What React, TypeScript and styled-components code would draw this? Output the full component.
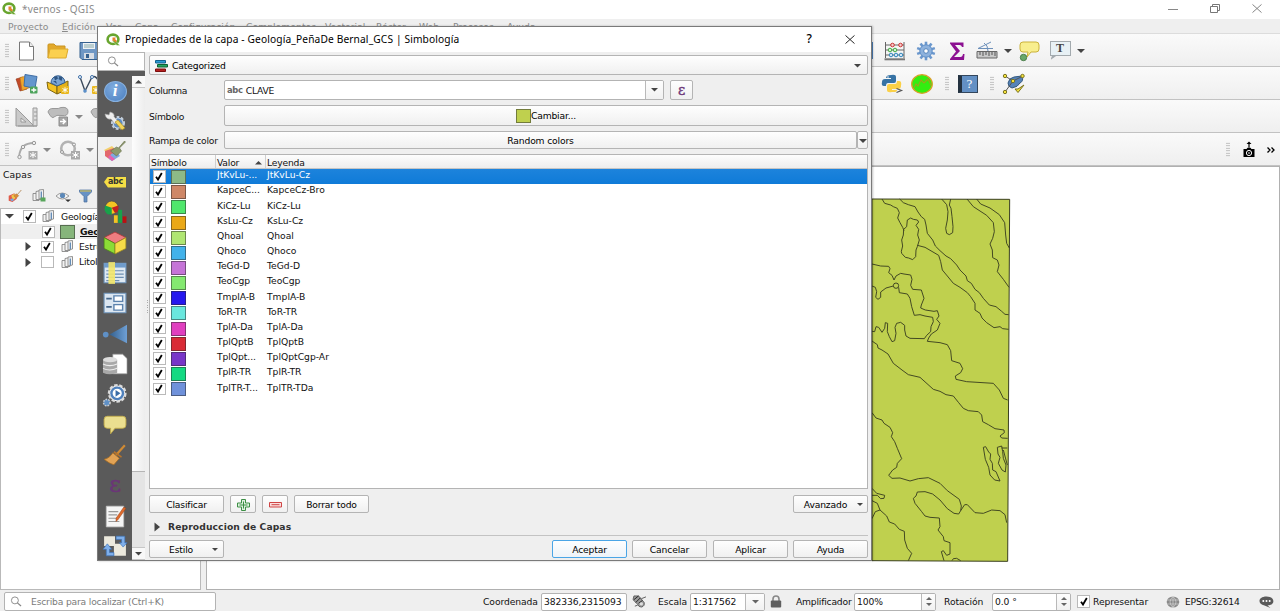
import React from "react";
import styled, { createGlobalStyle, css } from "styled-components";

const Global = createGlobalStyle`
  * { box-sizing: border-box; }
  html, body { margin: 0; padding: 0; overflow: hidden; }
  body { font-family: "DejaVu Sans", sans-serif; font-size: 9.2px; color: #111; line-height: 12px; }
  svg { display: block; overflow: visible; flex: none; }
`;

/* ---------- main window ---------- */
const Window = styled.div`
  width: 1280px; height: 611px; position: relative; overflow: hidden;
  display: flex; flex-direction: column; background: #efefef; white-space: nowrap;
`;
const TitleBar = styled.div`
  height: 19px; flex: none; background: #fff; display: flex; align-items: center;
  color: #8c8c8c; font-family: "Noto Sans", sans-serif; font-size: 10px; letter-spacing: .2px;
  padding: 0 18px 2px 2px; gap: 5px;
`;
const WindowButtons = styled.div`margin-left: auto; display: flex; gap: 32px; align-items: center;`;
const MenuBar = styled.div`
  height: 15px; flex: none; display: flex; align-items: center; color: #8a8a8a; padding: 2px 0 0 8px;
  background: #efefef; border-bottom: 1px solid #dcdcdc;
`;
const MenuItem = styled.span<{ $w: number }>`width: ${p => p.$w}px; letter-spacing: .05px; flex: none;`;
const Toolbar = styled.div`
  height: 33px; flex: none; display: flex; align-items: center; padding-top: 1px;
  background: linear-gradient(#fafafa, #efefef); border-bottom: 1px solid #c2c2c2;
`;
const Slot = styled.div<{ $w: number }>`
  width: ${p => p.$w}px; height: 100%; flex: none; display: flex; align-items: center; justify-content: center;
`;
const RightTools = styled.div<{ $w: number }>`
  width: ${p => p.$w}px; height: 100%; margin-left: auto; display: flex; flex: none; align-items: center;
`;
const Grip = styled.div`
  width: 4px; height: 15px;
  background-image: radial-gradient(circle, #b5b5b5 35%, transparent 45%); background-size: 2px 2.5px;
`;
const SaveEdge = styled.div`width: 2px; height: 17px; background: #4d83bd; margin-right: 6px;`;

const Body = styled.div`flex: 1; min-height: 0; display: flex; gap: 5px;`;
const LayersPanel = styled.div`width: 201px; flex: none; display: flex; flex-direction: column;`;
const PanelTitle = styled.div`height: 17px; padding: 3px 0 0 3px; letter-spacing: .1px;`;
const PanelTools = styled.div`height: 25px; display: flex; align-items: center; padding-left: 3px;`;
const Tree = styled.div`flex: 1; border: 1px solid #b9b9b9; background: #fff;`;
const TreeRow = styled.div<{ $pad: number; $active?: boolean }>`
  height: 15.2px; display: flex; align-items: center; padding-left: ${p => p.$pad}px;
  background: ${p => (p.$active ? "#efefef" : "none")}; letter-spacing: -.2px;
  ${p => p.$active && css`font-weight: bold; text-decoration: underline;`}
`;
const TreeIcon = styled.div<{ $w: number }>`width: ${p => p.$w}px; flex: none; display: flex;`;
const Canvas = styled.div`
  flex: 1; border: 1px solid #b0b0b0; background: #fff; display: flex; padding: 23px 0 0 653px;
`;

const StatusBar = styled.div`height: 21px; flex: none; display: flex; align-items: center; padding: 2px 6px 0 4px; letter-spacing: -.1px;`;
const Field = styled.div<{ $w: number; $h?: number; $ml?: number }>`
  width: ${p => p.$w}px; height: ${p => p.$h ?? 18}px; flex: none; margin-left: ${p => p.$ml ?? 0}px;
  border: 1px solid #b3b3b3; border-radius: 2px; background: #fff; display: flex; align-items: center; padding-left: 2px;
  overflow: hidden;
`;
const FieldText = styled.span`padding-top: 1px;`;
const FieldEnd = styled.div<{ $w: number }>`
  margin-left: auto; width: ${p => p.$w}px; height: 100%; flex: none; border-left: 1px solid #b9b9b9;
  background: linear-gradient(#fdfdfd, #f1f1f1);
  display: flex; flex-direction: column; gap: 3px; align-items: center; justify-content: center;
`;
const Caption = styled.span<{ $w: number; $ml: number; $ls?: number }>`
  width: ${p => p.$w}px; margin-left: ${p => p.$ml}px; flex: none; padding-top: 1px; letter-spacing: ${p => p.$ls ?? -.08}px;
`;
const Placeholder = styled.span`color: #7b7b7b; padding: 1px 0 0 6px; letter-spacing: -.18px;`;

/* ---------- dialog ---------- */
const Dialog = styled.div`
  position: absolute; left: 97px; top: 26px; width: 775px; height: 535px; background: #efefef;
  border: 1px solid #7a7a7a; box-shadow: 1px 0 2px rgba(0,0,0,.25); display: flex; flex-direction: column; letter-spacing: -.25px;
`;
const DialogTitle = styled.div`
  height: 25px; flex: none; background: #fff; display: flex; align-items: center; padding: 0 16px 1px 8px; gap: 4px;
  font-family: "Noto Sans", sans-serif; font-size: 10.2px; color: #000; letter-spacing: .13px;
`;
const HelpMark = styled.span`margin-left: auto; margin-right: 29px; font-size: 12px; font-weight: 500;`;
const DialogBody = styled.div`flex: 1; min-height: 0; display: flex;`;
const Side = styled.div`width: 47px; flex: none; display: flex; flex-direction: column;`;
const SideSearch = styled.div`
  height: 19px; flex: none; background: #fff; border: 1px solid #b5b5b5; border-left: 0; padding: 3px 0 0 9px;
`;
const SideColumns = styled.div`flex: 1; min-height: 0; display: flex;`;
const Categories = styled.div`width: 34px; background: #5a5a5a; padding-top: 4.9px; overflow: hidden;`;
const Category = styled.div<{ $active?: boolean }>`
  height: 30.35px; display: flex; align-items: center; justify-content: center;
  background: ${p => (p.$active ? "#efefef" : "none")};
`;
const ScrollBar = styled.div`width: 13px; display: flex; flex-direction: column; background: #f4f4f4; border-top: 5px solid #5a5a5a;`;
const ScrollCap = styled.div`height: 12px; flex: none; display: flex; align-items: center; justify-content: center; background: #f8f8f8; border-bottom: 1px solid #c6c6c6;`;
const ScrollThumb = styled.div`height: 384px; flex: none; background: linear-gradient(90deg, #fdfdfd, #ededed); border-bottom: 1px solid #b5b5b5;`;
const ScrollTrack = styled.div`flex: 1; background: #e4e4e4; border-bottom: 1px solid #c6c6c6;`;
const Splitter = styled.div`
  width: 4px; flex: none; display: flex; align-items: center; justify-content: center; padding-top: 2px;
`;
const SplitDots = styled.div`width: 1px; height: 15px; background: repeating-linear-gradient(#aaa 0 1px, transparent 1px 2.5px);`;
const Main = styled.div`flex: 1; padding: 3px 4px 0 0; display: flex; flex-direction: column;`;
const Button = styled.div<{ $w?: number; $h?: number; $ml?: number; $primary?: boolean; $left?: boolean; $ls?: number }>`
  ${p => (p.$w ? `width: ${p.$w}px; flex: none;` : "flex: 1;")}
  height: ${p => p.$h ?? 18}px; margin-left: ${p => p.$ml ?? 0}px;
  border: 1px solid ${p => (p.$primary ? "#4aa5e6" : "#b4b4b4")}; border-radius: 2px;
  background: ${p => (p.$primary ? "linear-gradient(#fdfeff, #eef3f8)" : "linear-gradient(#fefefe, #f0f0f0)")};
  display: flex; align-items: center; justify-content: ${p => (p.$left ? "flex-start" : "center")};
  letter-spacing: ${p => p.$ls ?? -.15}px; padding-top: 1px; color: #000;
`;
const FormRow = styled.div<{ $mt: number }>`display: flex; align-items: center; margin-top: ${p => p.$mt}px; flex: none;`;
const FormLabel = styled.span<{ $ls?: number }>`width: 75px; flex: none; padding-top: 2px; letter-spacing: ${p => p.$ls ?? -.25}px;`;
const TypeIcon = styled.span`font-weight: bold; color: #666; font-size: 8.4px; margin-right: 3px; letter-spacing: -.3px;`;
const ArrowAt = styled.div<{ $mr: number }>`margin-left: auto; margin-right: ${p => p.$mr}px;`;
const FillBox = styled.div<{ $c: string; $s?: number }>`
  width: ${p => p.$s ?? 15}px; height: ${p => (p.$s ?? 15) - 1.5}px; flex: none; background: ${p => p.$c};
  border: 1px solid rgba(40,40,40,.5);
`;
const Table = styled.div`height: 335px; flex: none; margin-top: 5px; border: 1px solid #b4b4b4; background: #fff;`;
const HeaderRow = styled.div`
  height: 14px; display: flex; background: linear-gradient(#fdfdfd, #ededed); border-bottom: 1px solid #c4c4c4; letter-spacing: -.2px;
`;
const HeaderCell = styled.div<{ $w?: number }>`
  ${p => (p.$w ? `width: ${p.$w}px; border-right: 1px solid #cfcfcf;` : "flex: 1;")}
  padding: 2px 0 0 1px; display: flex; align-items: center;
`;
const Row = styled.div<{ $sel?: boolean }>`
  height: 15.17px; display: flex; align-items: center; padding-left: 3px;
  ${p => p.$sel && css`background: linear-gradient(#1d83dc, #0f7bd8); color: #fff;`}
`;
const Check = styled.div`
  width: 12.5px; height: 12.5px; border: 1px solid #b9b9b9; background: #fff; flex: none;
  display: flex; align-items: center; justify-content: center;
`;
const Swatch = styled(FillBox)`margin: 1px 31px 0 5.5px; height: 14px; width: 15px;`;
const Cell = styled.span<{ $w: number; $ls: number }>`
  width: ${p => p.$w}px; flex: none; margin-top: -2.5px; letter-spacing: ${p => p.$ls}px;
`;
const Group = styled.div`
  height: 19px; flex: none; margin-top: 4px; border-bottom: 1px solid #c3c3c3; display: flex; align-items: center;
  gap: 8px; padding: 1px 0 0 5px; font-weight: bold; color: #333; letter-spacing: .1px;
`;

/* ---------- glyphs ---------- */
const Down = ({ s = 8, c = "#444" }: { s?: number; c?: string }) => (
  <svg width={s} height={s / 2} viewBox="0 0 8 4"><path d="M0 0h8L4 4z" fill={c} /></svg>
);
const Up = ({ s = 8, c = "#444" }: { s?: number; c?: string }) => (
  <svg width={s} height={s / 2} viewBox="0 0 8 4"><path d="M0 4h8L4 0z" fill={c} /></svg>
);
const Right = ({ c = "#444", h = 9 }: { c?: string; h?: number }) => (
  <svg width="6" height={h} viewBox="0 0 6 9"><path d="M.5 0v9L6 4.500z" fill={c} /></svg>
);
const Tick = () => (
  <svg width="8" height="9" viewBox="0 0 8 9"><path d="M1 4.800L3 7.500L6.800 1" fill="none" stroke="#000" strokeWidth="1.8" /></svg>
);
const Lens = () => (
  <svg width="12" height="11" viewBox="0 0 12 12" fill="none" stroke="#888"><circle cx="4.800" cy="4.800" r="3.800" /><path d="M7.500 7.500l4 3.500" strokeWidth="1.400" /></svg>
);
const Logo = () => (
  <svg width="15" height="13" viewBox="0 0 15 13">
    <ellipse cx="7" cy="6.300" rx="5.400" ry="4.700" fill="none" stroke="#68a52e" strokeWidth="2.600" />
    <path d="M7.500 6l6.500 6.500h-3L7 8.500z" fill="#68a52e" stroke="#fff" strokeWidth=".4" />
    <path d="M6.500 4.500h3.500l-1 1.500 2 2-1.500 1.500-2-2-1 1z" fill="#e8812c" />
  </svg>
);

const I = ({ children, w = 22, h = 20 }: { children: React.ReactNode; w?: number; h?: number }) => (
  <svg width={w} height={h} viewBox="0 0 22 20">{children}</svg>
);
const PageIcon = () => <I><path d="M3.500 1h10l4 4.500V19h-14z" fill="#fff" stroke="#777" /><path d="M13.500 1v4.500h4" fill="#eee" stroke="#777" /></I>;
const FolderIcon = () => <I><path d="M1 17V4q0-1 1-1h5l2 2h9v3" fill="#e3a92a" stroke="#c99422" /><path d="M1 17l2-9h18l-2 9z" fill="#fbd04f" stroke="#dca92c" /></I>;
const SaveIcon = () => <I><path d="M2 1.500h18v17H4l-2-2z" fill="#6f97c4" stroke="#35608f" /><path d="M5 2h12v6H5z" fill="#eef2f6" /><path d="M6 4h10M6 6h10" stroke="#8aa" /><path d="M6 12h10v6H6z" fill="#d7dde4" /><path d="M8 13h3v4H8z" fill="#35608f" /></I>;
const PlusBadge = () => <g><rect x="14" y="12.500" width="7.500" height="7" rx="1" fill="#4ca35b" /><path d="M15.300 16h5M17.800 13.700v4.600" stroke="#fff" strokeWidth="1.300" /></g>;
const StarBadge = ({ c = "#e9b820" }: { c?: string }) => <g><rect x="14" y="12" width="8" height="8" rx="1" fill={c} /><path d="M18 13.300v5.400M15.500 14.500l5 3M20.500 14.500l-5 3" stroke="#fff" /></g>;
const LayersIcon = () => <I><path d="M0 5l7-2 4 12-7 2z" fill="#c34a28" stroke="#8f3418" strokeWidth=".6" /><path d="M4 3.500l9-2 1 12-8 3z" fill="#f0a52e" stroke="#b4761b" strokeWidth=".6" /><path d="M9 .5l12 2-2 12L8 12z" fill="#6496cd" stroke="#3f6ea5" /><PlusBadge /></I>;
const BoxIcon = () => <I><path d="M0 8l10 4v8L1 15z" fill="#f4c321" stroke="#7d6410" /><path d="M10 12l11-5v8l-11 5z" fill="#e4b11a" stroke="#7d6410" /><path d="M4 9a6.500 6.500 0 1 1 14-.5L10 12z" fill="#7ba5d3" stroke="#345f90" /><path d="M7 3l3-1 1 2.500-3 2zM12.500 2l3 1.500-1 3.500-3-2zM6 7l3 0 1 3z" fill="#2f5582" /><StarBadge /></I>;
const VectorIcon = () => <I><path d="M2 3l5 14L14 3q3-2 6 3" fill="none" stroke="#3c4a5c" strokeWidth="1.400" /><g fill="#fff" stroke="#3c6fa8"><circle cx="2" cy="3" r="1.500" /><circle cx="14" cy="3" r="1.500" /></g><circle cx="7" cy="17" r="1.800" fill="#5b8fc9" /><StarBadge /></I>;
const SetSquareIcon = () => <I><path d="M0 1v18h18z" fill="#c9c9c9" stroke="#9a9a9a" /><path d="M5 11v4h5z" fill="#efefef" stroke="#9a9a9a" /><path d="M17 1h4v18h-4z" fill="#ddd" stroke="#9a9a9a" /><path d="M2 19h19M18 5h3M18 9h3M18 13h3" stroke="#999" /></I>;
const BlobIcon = ({ badge = true }: { badge?: boolean }) => <I><path d="M1 5q1-4 6-3.500t7-1q7-1 7 4t-6 4-8 1.500-6-5z" fill="#bdbdbd" stroke="#999" />{badge && <g><path d="M12 10h8.500v9H12z" fill="#a5a5a5" stroke="#8d8d8d" /><path d="M13 14.500h5M15.800 12l2.500 2.500-2.500 2.500" fill="none" stroke="#fff" strokeWidth="1.500" /></g>}</I>;
const CurveIcon = () => <I><path d="M2 17Q3 3 17 3" fill="none" stroke="#aaa" strokeWidth="1.800" /><g fill="#eee" stroke="#999"><circle cx="2.500" cy="17" r="1.700" /><circle cx="6" cy="7" r="1.700" /><circle cx="17" cy="3" r="1.700" /></g><rect x="11.500" y="11" width="9" height="8.500" fill="#aaa" /><path d="M16 12v6M13 13.500l6 3M19 13.500l-6 3" stroke="#fff" /></I>;
const CircleIcon = () => <I><circle cx="9" cy="8.500" r="6.800" fill="none" stroke="#b3b3b3" strokeWidth="2.600" /><g fill="#eee" stroke="#999"><circle cx="3" cy="12" r="1.500" /><circle cx="15" cy="4.500" r="1.500" /></g><rect x="12" y="11" width="9" height="8.500" fill="#aaa" /><path d="M16.500 12v6M13.500 13.500l6 3M19.500 13.500l-6 3" stroke="#fff" /></I>;

const AbacusIcon = () => <I><path d="M1.500 1v16M20 1v16M1.500 4h18.500M1.500 9h18.500M1.500 14h18.500" stroke="#666" fill="none" /><path d="M.5 17.300h20.500v2H.5z" fill="#777" /><g fill="#f6c9c9" stroke="#c33"><circle cx="8.500" cy="4" r="1.800" /><circle cx="16.500" cy="4" r="1.800" /></g><g fill="#d3f0d3" stroke="#4a4"><circle cx="6" cy="9" r="1.800" /><circle cx="11" cy="9" r="1.800" /></g><g fill="#d3e4f5" stroke="#38b"><circle cx="7" cy="14" r="1.800" /><circle cx="12" cy="14" r="1.800" /><circle cx="17" cy="14" r="1.800" /></g></I>;
const GearIcon = () => <I><g transform="translate(11 10)"><g stroke="#6a97cd" strokeWidth="2.600">{[0, 36, 72, 108, 144].map(a => <path key={a} d="M0-9.300V9.300" transform={`rotate(${a})`} />)}</g><circle r="6.200" fill="#8db1dc" stroke="#5f8fc8" /><circle r="2.300" fill="#fff" stroke="#5585bd" /></g></I>;
const SigmaIcon = () => <I><path d="M4 1.500h13.500v4.500H16Q15.500 4 13.500 4H9l5 6-6 6h6.500q2 0 2.500-3h1.500L18 19H4v-1l6-7.500-6-8z" fill="#8c1091" /></I>;
const MeasureIcon = () => <I><path d="M1 10.500h20v6.500H1z" fill="#c8c8c8" stroke="#666" /><path d="M4 11v3M7 11v4M10 11v3M13 11v4M16 11v3M19 11v4" stroke="#555" /><path d="M2 7.500L15 1M2 7.500h15M8 2q4 2 4 8" fill="none" stroke="#6d90ba" /></I>;
const TipIcon = () => <I><path d="M5 1h13q3 0 3 3v4q0 3-3 3h-5l-4 5 1-5H5q-3 0-3-3V4q0-3 3-3z" fill="#f8ee8e" stroke="#cbb23b" /><circle cx="5.500" cy="16.500" r="3.200" fill="#69a869" stroke="#4b7e4b" /></I>;
const TextNote = styled.div`
  width: 21px; height: 15px; margin-bottom: 4px; border: 1px solid #a3aaae; background: #e8f1f5; text-align: center;
  font: bold 12px/12px "Liberation Serif", serif; color: #444; position: relative;
`;
const NoteTail = styled.div`
  position: absolute; left: 0; top: 13px; width: 7px; height: 5px;
  background: #a3aaae; clip-path: polygon(25% 0, 100% 0, 0 100%);
`;
const PythonIcon = () => <I><path d="M10 1q5-1 5 2v4q0 2-2 2H7q-2 0-2 3H3Q0 12 1 8q0-3 3-3h6V4H5q0-3 5-3z" fill="#3773a5" /><path d="M11 18q-5 1-5-2v-4q0-2 2-2h6q2 0 2-3h2q3 0 2 5 0 3-3 3h-6v1h5q0 2-3 2z" fill="#fbd148" /><circle cx="7" cy="3" r=".8" fill="#fff" /><path d="M15.500 14.500l5 2-5 2" fill="none" stroke="#555" strokeWidth="1.200" /></I>;
const GreenIcon = () => <I><ellipse cx="11" cy="10" rx="10.300" ry="9.300" fill="#33ee11" stroke="#d9a028" strokeWidth="1.300" /><path d="M3 14l2-4 2 2 3-6 3 3 2-2 2-2 2 4 1 3" fill="none" stroke="#9aa81c" strokeWidth="1.100" /></I>;
const Book = styled.div`
  width: 20px; height: 18px; background: #6390c4; border: 1px solid #33465c; border-left: 4px solid #243240;
  color: #fff; text-align: center; font: 13px/16px "Liberation Serif", serif;
`;
const VertexIcon = () => <I><path d="M5 9q1-5 6-6l8-1q2 5-2 7-2 4-8 5-4-1-4-5z" fill="#5583b8" stroke="#34597f" /><path d="M2 2l8 5-8 11M10 7l9-4.500" fill="none" stroke="#555" /><g fill="#f5e23c" stroke="#7a7320"><circle cx="2" cy="2" r="1.700" /><circle cx="19.500" cy="2" r="1.700" /><circle cx="10" cy="7" r="1.700" /><circle cx="2" cy="18" r="1.700" /></g><path d="M12 15l3 3.500L21 11l-6 4z" fill="#f5e23c" stroke="#7a7320" /></I>;
const CameraIcon = () => <svg width="14" height="17" viewBox="0 0 14 17"><path d="M7 .5l2.500 2.500H7.600v3.500H6.400V3H4.500zM1.500 8h3l1-1.200h3l1 1.200h3v8h-11z" fill="#000" /><circle cx="7" cy="12" r="2.600" fill="none" stroke="#fff" /><circle cx="7" cy="12" r=".8" fill="#fff" /></svg>;

const GroupIcon = ({ add }: { add?: boolean }) => <svg width="14" height="13" viewBox="0 0 14 13"><g fill="#f3f3f3" stroke="#888" strokeWidth=".9"><path d="M1 4.500h6v7H1z" /><path d="M4 2.500l5-1v9H4z" /><path d="M7 1l4.500-.5V9L7 10z" /></g><path d="M9.300 2.500v6.500" stroke="#5d88b5" strokeWidth="1.300" />{add && <path d="M8.500 8.500h5v4h-5z" fill="#58a65c" />}</svg>;
const StyleIcon = () => <svg width="14" height="12" viewBox="0 0 22 19"><path d="M1 9l9-4 4 9-7 5-6-2z" fill="#e05b4b" /><path d="M5 9l5-3 3 6-5 4z" fill="#f1c64b" /><path d="M3 15l4-2 3 3-4 2z" fill="#7aa7dc" /><path d="M21 0l-6 7 2 2-4 4-4-4 4-3 2 1z" fill="#d98b3a" stroke="#a36a2a" strokeWidth=".6" /></svg>;
const SymbologyIcon = () => <I w={24} h={20}><path d="M0 8l8-4 3 3-7 5z" fill="#f3cf6a" /><path d="M1 9l9-3 4 8-6 5-7-5z" fill="#e2686c" /><path d="M7 12l6-2 3 4-8 5-3-2z" fill="#7fa9de" /><path d="M4 15l4 4 3-2-5-4z" fill="#ea5fae" /><path d="M21.500 0l-6 6 2 3-5 5-6-5 6-4 2 1 6-7z" fill="#8e9a6c" stroke="#666f4b" strokeWidth=".6" /></I>;
const EyeIcon = () => <svg width="17" height="12" viewBox="0 0 17 12"><path d="M1 6q6-6 13 0-7 6-13 0z" fill="#f4f4f4" stroke="#999" /><circle cx="7.500" cy="5.500" r="2.600" fill="#5b88b8" /><path d="M10 9.500h6l-3 2.500z" fill="#333" /></svg>;
const FunnelIcon = () => <svg width="13" height="13" viewBox="0 0 13 13"><path d="M.5 1h12v2L8 7.500V13H5V7.500L.5 3z" fill="#6792c4" stroke="#476f9d" strokeWidth=".7" /><path d="M1 1.500h11v1H1z" fill="#e2c444" /></svg>;

const InfoMark = styled.div`
  width: 23px; height: 21px; border-radius: 50%; background: radial-gradient(circle at 40% 30%, #7fabde, #4a7fc0);
  border: 1px solid #86b0df; color: #fff; text-align: center; font: italic bold 17px/18px "Liberation Serif", serif;
`;
const AbcTag = styled.div`
  width: 22px; height: 11px; background: #f5de45; clip-path: polygon(0 50%, 18% 0, 100% 0, 100% 100%, 18% 100%);
  font-weight: bold; font-size: 8px; line-height: 10px; padding-left: 4px; letter-spacing: -.3px; color: #333;
`;
const Epsilon = styled.span<{ $s: number }>`
  font: ${p => p.$s}px/1 "DejaVu Serif", serif; color: #6b3577; padding-bottom: 2px; -webkit-text-stroke: .4px #6b3577;
`;
const WrenchIcon = () => <I w={24}><circle cx="14" cy="12" r="5.500" fill="#d7e4f2" stroke="#c3cfdc" strokeWidth="3" strokeDasharray="2.500 1.500" /><circle cx="14" cy="12" r="4.500" fill="#5c8bc4" /><path d="M1 3l4 1 1-3q5 1 4 5l4 4-3 3-4-5Q2 9 1 3z" fill="#eee" stroke="#aaa" strokeWidth=".6" /><path d="M11 11l3-2 7 8-3 2z" fill="#f2d45a" stroke="#a2861c" strokeWidth=".6" /></I>;
const DiagramIcon = () => <I w={24} h={22}><circle cx="8" cy="6" r="6" fill="#f3c423" stroke="#444" strokeWidth=".6" /><path d="M8 6L2 4q-2 5 2 8l4 .5z" fill="#19a14a" /><path d="M8 6l6-2q1 6-3 7z" fill="#c32020" /><path d="M10 13h3.500v7H10z" fill="#f3c423" /><path d="M14 8h3.500v12H14z" fill="#19a14a" /><path d="M18 14h3.500v6H18z" fill="#b11" /></I>;
const CubeIcon = () => <I w={24} h={22}><path d="M11 0l10 5-10 5.500L1 5z" fill="#ef7d80" stroke="#a33" strokeWidth=".7" /><path d="M1 5l10 5.500V20L1 15z" fill="#8bdc36" stroke="#4a7d18" strokeWidth=".7" /><path d="M21 5l-10 5.500V20l10-5z" fill="#f5dc48" stroke="#998620" strokeWidth=".7" /></I>;
const TableIcon = () => <I w={24} h={22}><path d="M1 1h20v18H1z" fill="#dfe9f3" stroke="#7096bd" /><path d="M1 1h20v4H1z" fill="#6f9bcb" /><path d="M3 8h16M3 11h16M3 14h16M3 17h12" stroke="#6d8fb3" /><path d="M5 0h6v20H5z" fill="#f4e76a" opacity=".9" /></I>;
const FormIcon = () => <I w={24} h={22}><path d="M1 1h20v18H1z" fill="#dbe6f1" stroke="#7096bd" /><path d="M3 6h5M3 13.500h5" stroke="#45678c" strokeWidth="1.500" /><path d="M10 3.500h8v5h-8zM10 11.500h8v5h-8z" fill="#fff" stroke="#5c83ae" strokeWidth="1.300" /></I>;
const JoinIcon = () => <I w={24} h={22}><defs><linearGradient id="tri"><stop offset="0" stopColor="#33608f" /><stop offset="1" stopColor="#6fa0d5" /></linearGradient></defs><path d="M6 10.500L22 1.500v17z" fill="url(#tri)" /><circle cx="2.500" cy="10.500" r="2.600" fill="#5f90c6" /></I>;
const DbIcon = () => <I w={24} h={22}><path d="M9 1h9l4 4v14H9z" fill="#fff" stroke="#999" strokeWidth=".6" /><path d="M0 6v12q6 3 13 0V6z" fill="#a9a9a9" /><ellipse cx="6.500" cy="6" rx="6.500" ry="2.500" fill="#ddd" /><path d="M0 10q6 3 13 0M0 14q6 3 13 0" fill="none" stroke="#eee" /></I>;
const ActionIcon = () => <I w={24} h={22}><circle cx="13" cy="8.500" r="7.300" fill="#fff" stroke="#ddd" strokeWidth="2.600" strokeDasharray="3 1.500" /><circle cx="13" cy="8.500" r="5.300" fill="#fff" stroke="#4e80bc" strokeWidth="2.200" /><path d="M11.500 5.500v6l4.500-3z" fill="#3a6ca6" /><circle cx="3.500" cy="17" r="3" fill="#5f90c6" stroke="#ccc" strokeWidth="1.400" strokeDasharray="1.500 1" /></I>;
const BubbleIcon = () => <I w={24} h={22}><path d="M4 2h14q3 0 3 3v5q0 3-3 3h-7l-4 5v-5H4q-3 0-3-3V5q0-3 3-3z" fill="#ebdf90" stroke="#c4ae4a" strokeWidth=".8" /></I>;
const BroomIcon = () => <I w={24} h={22}><path d="M20 1l-8 9" stroke="#d08a33" strokeWidth="2" /><path d="M9 8l6 5-5 6q-4-1-9-5 5-1 8-6z" fill="#e2a355" stroke="#a36b22" strokeWidth=".7" /><path d="M10 7l7 5" stroke="#b8742a" strokeWidth="1.500" /></I>;
const NotesIcon = () => <I w={24} h={22}><path d="M3 1h16v19H3z" fill="#f5f5f5" stroke="#bbb" strokeWidth=".7" /><path d="M5 6h9M5 9h8M5 12h8M5 15h10" stroke="#999" /><path d="M21 3l-7 10-2 2v-3L19 2z" fill="#e06a2c" stroke="#994014" strokeWidth=".5" /></I>;
const SyncIcon = () => <I w={24} h={22}><path d="M1 1h10v9H1zM10 8h11v11H10z" fill="#ece9dd" /><path d="M12 1h8v6h2l-3.500 4L15 7h2V4h-5z" fill="#7fafea" stroke="#3b72b8" strokeWidth=".6" /><path d="M10 19H3v-6H0l4-5 4 5H6v3h4z" fill="#7fafea" stroke="#3b72b8" strokeWidth=".6" /></I>;
const CatIcon = () => <svg width="13" height="12" viewBox="0 0 13 12"><path d="M.5.5h10v2.500H.5z" fill="#2b9bd5" stroke="#14618e" /><path d="M2.500 4.500h10V7h-10z" fill="#22a65f" stroke="#0f6035" /><path d="M.5 9h10v2.500H.5z" fill="#b51f1f" stroke="#7b0d0d" /></svg>;
const PlusIcon = () => <svg width="13" height="12" viewBox="0 0 13 12"><path d="M4.500.5h4v3.500h4v4h-4v3.500h-4V8h-4V4h4z" fill="#dff1df" stroke="#3c8f45" /><path d="M6.500 2.500v7M2.500 6h8" stroke="#3c8f45" /></svg>;
const MinusIcon = () => <svg width="13" height="6" viewBox="0 0 13 6"><path d="M.5.5h12v4.500H.5z" fill="#fbdede" stroke="#cf4444" /><path d="M2.500 2.700h8" stroke="#cf4444" /></svg>;
const MouseIcon = () => <svg width="15" height="13" viewBox="0 0 16 14"><path d="M2 1l5 0 6 7q1 4-3 5-3 0-4-3L1 5z" fill="#999" stroke="#444" strokeWidth=".8" /><path d="M2 5l5-4M4 8l5-5M7 9l4-3" stroke="#222" /><path d="M10 4l5-2M3 12l3-1" stroke="#555" /><circle cx="10" cy="9.500" r="1.800" fill="#ddd" /></svg>;
const LockIcon = () => <svg width="12" height="13" viewBox="0 0 12 13"><path d="M3 6V4q0-3 3-3t3 3v2" fill="none" stroke="#888" strokeWidth="1.600" /><rect x=".8" y="5.500" width="10.400" height="7" rx="1" fill="#5f5f5f" /></svg>;
const GlobeIcon = () => <svg width="14" height="12" viewBox="0 0 14 12"><ellipse cx="7" cy="6" rx="6.300" ry="5.500" fill="#8a8a8a" /><path d="M7 .5v11M1 4h12M1 8h12M7 .5q-6 5.500 0 11M7 .5q6 5.500 0 11" fill="none" stroke="#ddd" strokeWidth=".6" /></svg>;
const ChatIcon = () => <svg width="15" height="12" viewBox="0 0 15 12"><path d="M7.500.5c9 0 9 9 1 9l3 2.500-6-2.500c-7-1-7-9 2-9z" fill="#5a5a5a" /><g fill="#fff"><circle cx="4.300" cy="5" r="1" /><circle cx="7.500" cy="5" r="1" /><circle cx="10.700" cy="5" r="1" /></g></svg>;

/* Geological outlines; three drawing units per pixel. */
const northLines = [
  "66,27 74,40 92,45 100,50 112,55 118,68 113,84 120,98 128,112 132,122",
  "119,27 130,38 145,44 165,50 174,66 184,80 194,88 198,105 202,130 218,150 226,168 240,182 258,198 272,206 290,225 300,240 318,258 322,272 334,280 345,298 358,308 370,325 388,345 408,350 425,364 435,373 446,374",
  "142,90 152,84 160,88 172,90 176,96 168,106 176,118 173,135 178,150 172,170 168,180 167,200 158,209 146,204 136,202 125,190 124,184 128,168 125,150 130,135 131,118 140,110 142,90",
  "172,166 195,172 236,196 242,215 247,240 262,258 280,280 300,292 322,308 332,320 345,340 345,360 360,370 366,384 380,398 402,413 420,410 428,416 446,418",
  "245,27 260,44 264,65 262,90 257,115 260,130 268,134 278,128 279,110 276,80 273,55 268,45 272,27",
  "321,27 340,50 380,76 400,98 403,125 398,145 390,162 397,180 398,203 412,210 417,225 412,245 430,268 447,292",
  "350,27 362,42 390,54 418,74 434,98 437,135 440,160 448,174",
  "36,222 62,228 86,229 90,236 86,248 96,256 102,270 108,258 122,250 132,252 152,255 156,268 152,286 158,298 184,300 192,325 184,345 182,354 196,360 222,364 232,362 237,378 230,388 240,400 232,420 214,432 206,444 202,454 240,458 262,464 272,482 275,512 300,520 308,536 302,548 286,558 288,568 320,575 400,580 418,600 430,625 443,630",
  "100,288 78,294 62,306 62,322 54,328 47,322 50,305 46,292 36,288",
  "116,292 118,308 142,312 150,325 155,350 163,376 180,374 195,378 218,382 220,395 213,410 212,425 200,436 193,446 150,445 138,438 134,420 134,406 122,397 110,400 105,412 108,430 104,452 96,455 88,440 82,425 83,400 76,398 74,415 66,427 56,412 48,410 44,425 36,424",
  "36,453 52,464 54,474 66,480 84,492 100,520 126,540 145,554 180,562 220,598 240,604 258,614 280,618 296,638 310,655 325,662 355,665 365,675 368,695 385,704 405,716 432,720 433,728 420,738 425,744 443,745",
];
const southLines = [
  "36,128 48,144 66,150 72,160 90,172 98,188 94,200 104,215 112,235 125,266 112,280 110,292 98,300 86,316 96,325 120,324 150,333 175,326 205,323 240,340 262,362 298,388 304,408 302,422 296,432 282,430 262,416 240,390 218,372 195,365 172,366 168,378 160,385 165,400 185,425 195,438 210,442 238,444 240,470 234,480 250,500 252,512 270,518 270,552 260,556 250,542 244,545 252,572",
  "302,422 314,404 322,404 345,428 370,430 395,420 420,422 435,434 440,458",
  "36,355 50,370 74,376 72,385 62,386 52,376 36,376",
  "36,392 52,400 60,420 46,425 36,446",
  "60,420 80,438 88,456 104,462 118,478 133,484 134,510 142,535 155,550 145,572",
  "276,572 280,566 290,565 302,572",
  "370,232 377,230 386,246 392,252 390,268 397,280 398,300 408,305 420,333 404,330 390,315 386,292 376,268 370,232",
  "412,232 425,228 428,245 430,265 438,285 436,306 426,300 415,280 420,262 414,252 412,232",
  "425,234 442,234", "430,240 442,285",
];
const GeoMap = () => (
  <svg width="160" height="375" viewBox="0 0 480 1125">
    <path d="M36 27L449 28L443 1114L36 1112z" fill="#bfd04e" stroke="#3a3f20" strokeWidth="3" />
    <g fill="none" stroke="#3a401f" strokeWidth="2.800" strokeLinejoin="round">
      {northLines.map(points => <polyline key={points} points={points} />)}
      <circle cx="108" cy="287" r="8" />
      <g transform="translate(0 540)">{southLines.map(points => <polyline key={points} points={points} />)}</g>
    </g>
  </svg>
);

const menus: [string, number][] = [["Proyecto", 54], ["Edición", 44], ["Ver", 29], ["Capa", 36], ["Configuración", 75], ["Complementos", 79], ["Vectorial", 51], ["Ráster", 43], ["Web", 34], ["Procesos", 54], ["Ayuda", 40]];
const classes: [string, string, string][] = [
  ["JtKvLu-...", "JtKvLu-Cz", "#8db987"], ["KapceC...", "KapceCz-Bro", "#ce8767"], ["KiCz-Lu", "KiCz-Lu", "#50e76c"],
  ["KsLu-Cz", "KsLu-Cz", "#eaa817"], ["Qhoal", "Qhoal", "#b0e672"], ["Qhoco", "Qhoco", "#42b2ea"], ["TeGd-D", "TeGd-D", "#c574d7"],
  ["TeoCgp", "TeoCgp", "#84e970"], ["TmplA-B", "TmplA-B", "#2517ee"], ["ToR-TR", "ToR-TR", "#69e7de"], ["TplA-Da", "TplA-Da", "#e03fbf"],
  ["TplQptB", "TplQptB", "#d92b36"], ["TplQpt...", "TplQptCgp-Ar", "#7836c8"], ["TplR-TR", "TplR-TR", "#14d982"], ["TplTR-T...", "TplTR-TDa", "#6f91da"],
];
const categories: React.ReactNode[] = [
  <InfoMark>i</InfoMark>, <WrenchIcon />, <SymbologyIcon />, <AbcTag>abc</AbcTag>, <DiagramIcon />, <CubeIcon />, <TableIcon />, <FormIcon />,
  <JoinIcon />, <DbIcon />, <ActionIcon />, <BubbleIcon />, <BroomIcon />, <Epsilon $s={23}>ε</Epsilon>, <NotesIcon />, <SyncIcon />,
];

const Toolbars = () => (
  <>
    <Toolbar>
      <Slot $w={13}><Grip /></Slot><Slot $w={28}><PageIcon /></Slot><Slot $w={34}><FolderIcon /></Slot><Slot $w={28}><SaveIcon /></Slot>
      <RightTools $w={409}>
        <Slot $w={8}><SaveEdge /></Slot><Slot $w={32}><AbacusIcon /></Slot><Slot $w={30}><GearIcon /></Slot><Slot $w={32}><SigmaIcon /></Slot>
        <Slot $w={28}><MeasureIcon /></Slot><Slot $w={14}><Down /></Slot><Slot $w={28}><TipIcon /></Slot>
        <Slot $w={34}><TextNote>T<NoteTail /></TextNote></Slot><Slot $w={8}><Down /></Slot>
      </RightTools>
    </Toolbar>
    <Toolbar>
      <Slot $w={13}><Grip /></Slot><Slot $w={28}><LayersIcon /></Slot><Slot $w={34}><BoxIcon /></Slot><Slot $w={28}><VectorIcon /></Slot>
      <RightTools $w={403}>
        <Slot $w={30}><PythonIcon /></Slot><Slot $w={30}><GreenIcon /></Slot><Slot $w={20}><Grip /></Slot>
        <Slot $w={22}><Book>?</Book></Slot><Slot $w={26}><Grip /></Slot><Slot $w={18}><VertexIcon /></Slot>
      </RightTools>
    </Toolbar>
    <Toolbar>
      <Slot $w={13}><Grip /></Slot><Slot $w={28}><SetSquareIcon /></Slot><Slot $w={34}><BlobIcon /></Slot>
      <Slot $w={7}><Down c="#888" /></Slot><Slot $w={38}><BlobIcon badge={false} /></Slot>
    </Toolbar>
    <Toolbar>
      <Slot $w={13}><Grip /></Slot><Slot $w={30}><CurveIcon /></Slot><Slot $w={8}><Down c="#888" /></Slot>
      <Slot $w={38}><CircleIcon /></Slot><Slot $w={1}><Down c="#888" /></Slot>
      <RightTools $w={62}>
        <Slot $w={20}><Grip /></Slot><Slot $w={22}><CameraIcon /></Slot>
        <Slot $w={22}><svg width="8" height="6" viewBox="0 0 8 6" fill="none" stroke="#000" strokeWidth="1.300"><path d="M.5.5L3 3 .5 5.500M4.500.5L7 3 4.500 5.500" /></svg></Slot>
      </RightTools>
    </Toolbar>
  </>
);

const Layers = () => (
  <LayersPanel>
    <PanelTitle>Capas</PanelTitle>
    <PanelTools>
      <Slot $w={24}><StyleIcon /></Slot><Slot $w={24}><GroupIcon add /></Slot><Slot $w={24}><EyeIcon /></Slot><Slot $w={20}><FunnelIcon /></Slot>
    </PanelTools>
    <Tree>
      <TreeRow $pad={4}><TreeIcon $w={18}><Down s={9} /></TreeIcon><TreeIcon $w={19}><Check><Tick /></Check></TreeIcon><TreeIcon $w={19}><GroupIcon /></TreeIcon>Geología</TreeRow>
      <TreeRow $pad={41} $active><TreeIcon $w={18}><Check><Tick /></Check></TreeIcon><TreeIcon $w={20}><FillBox $c="#86b57b" /></TreeIcon>Geología</TreeRow>
      <TreeRow $pad={24}><TreeIcon $w={16}><Right /></TreeIcon><TreeIcon $w={20}><Check><Tick /></Check></TreeIcon><TreeIcon $w={18}><GroupIcon /></TreeIcon>Estructuras</TreeRow>
      <TreeRow $pad={24}><TreeIcon $w={16}><Right /></TreeIcon><TreeIcon $w={20}><Check /></TreeIcon><TreeIcon $w={18}><GroupIcon /></TreeIcon>Litología</TreeRow>
    </Tree>
  </LayersPanel>
);

const Status = () => (
  <StatusBar>
    <Field $w={212} $h={19}><Slot $w={18}><Lens /></Slot><Placeholder>Escriba para localizar (Ctrl+K)</Placeholder></Field>
    <Caption $w={56} $ml={267}>Coordenada</Caption>
    <Field $w={86} $ml={2}><FieldText>382336,2315093</FieldText></Field>
    <Slot $w={24}><MouseIcon /></Slot>
    <Caption $w={29} $ml={7}>Escala</Caption>
    <Field $w={75} $ml={3}><FieldText>1:317562</FieldText><FieldEnd $w={19}><Down c="#666" s={7} /></FieldEnd></Field>
    <Slot $w={22}><LockIcon /></Slot>
    <Caption $w={55} $ml={9} $ls={-.2}>Amplificador</Caption>
    <Field $w={82} $ml={3}><FieldText>100%</FieldText><FieldEnd $w={14}><Up s={6} c="#666" /><Down s={6} c="#666" /></FieldEnd></Field>
    <Caption $w={41} $ml={8}>Rotación</Caption>
    <Field $w={79} $ml={7}><FieldText>0.0 °</FieldText><FieldEnd $w={14}><Up s={6} c="#666" /><Down s={6} c="#666" /></FieldEnd></Field>
    <Slot $w={25}><Check><Tick /></Check></Slot>
    <Caption $w={58} $ml={-3}>Representar</Caption>
    <Slot $w={44}><GlobeIcon /></Slot>
    <Caption $w={57} $ml={-10} $ls={-.2}>EPSG:32614</Caption>
    <Slot $w={48}><ChatIcon /></Slot>
  </StatusBar>
);

const Properties = () => (
  <Dialog>
    <DialogTitle>
      <Logo /><span>Propiedades de la capa - Geología_PeñaDe Bernal_GCS | Simbología</span>
      <HelpMark>?</HelpMark>
      <svg width="10" height="9" viewBox="0 0 11 10"><path d="M.5.5l10 9M10.500.5l-10 9" stroke="#222" strokeWidth="1.100" /></svg>
    </DialogTitle>
    <DialogBody>
      <Side>
        <SideSearch><Lens /></SideSearch>
        <SideColumns>
          <Categories>{categories.map((icon, i) => <Category key={i} $active={i === 2}>{icon}</Category>)}</Categories>
          <ScrollBar>
            <ScrollCap><Up s={7} /></ScrollCap><ScrollThumb /><ScrollTrack /><ScrollCap><Down s={7} /></ScrollCap>
          </ScrollBar>
        </SideColumns>
      </Side>
      <Splitter><SplitDots /></Splitter>
      <Main>
        <FormRow $mt={0}><Button $h={20} $left><Slot $w={22}><CatIcon /></Slot>Categorized<ArrowAt $mr={6}><Down s={7} /></ArrowAt></Button></FormRow>
        <FormRow $mt={5}>
          <FormLabel $ls={-.4}>Columna</FormLabel>
          <Field $w={440} $h={20}><TypeIcon>abc</TypeIcon><FieldText>CLAVE</FieldText><FieldEnd $w={18}><Down s={7} /></FieldEnd></Field>
          <Button $w={23} $h={20} $ml={6}><Epsilon $s={14}>ε</Epsilon></Button>
        </FormRow>
        <FormRow $mt={5}><FormLabel>Símbolo</FormLabel><Button $h={21}><FillBox $c="#bfd04e" />Cambiar...</Button></FormRow>
        <FormRow $mt={5}><FormLabel>Rampa de color</FormLabel><Button $h={18}>Random colors</Button><Button $w={11}><Down s={8} /></Button></FormRow>
        <Table>
          <HeaderRow><HeaderCell $w={66}>Símbolo</HeaderCell><HeaderCell $w={50}>Valor<ArrowAt $mr={3}><Up s={7} /></ArrowAt></HeaderCell><HeaderCell>Leyenda</HeaderCell></HeaderRow>
          {classes.map(([value, legend, color], i) => (
            <Row key={i} $sel={i === 0}>
              <Check><Tick /></Check><Swatch $c={color} /><Cell $w={50} $ls={-.05}>{value}</Cell><Cell $w={100} $ls={0}>{legend}</Cell>
            </Row>
          ))}
        </Table>
        <FormRow $mt={6}>
          <Button $w={75}>Clasificar</Button><Button $w={26} $ml={6}><PlusIcon /></Button><Button $w={26} $ml={6}><MinusIcon /></Button>
          <Button $w={75} $ml={6}>Borrar todo</Button>
          <ArrowAt $mr={0}><Button $w={75} $left><Slot $w={63}>Avanzado</Slot><Down s={6} /></Button></ArrowAt>
        </FormRow>
        <Group><Right h={10} />Reproduccion de Capas</Group>
        <FormRow $mt={4}>
          <Button $w={75} $left><Slot $w={62}>Estilo</Slot><Down s={6} /></Button>
          <Button $w={75} $ml={328} $primary>Aceptar</Button><Button $w={75} $ml={5}>Cancelar</Button>
          <Button $w={75} $ml={6}>Aplicar</Button><Button $w={75} $ml={5}>Ayuda</Button>
        </FormRow>
      </Main>
    </DialogBody>
  </Dialog>
);

export default function App() {
  return (
    <Window>
      <Global />
      <TitleBar>
        <Logo /><span>*vernos - QGIS</span>
        <WindowButtons>
          <svg width="10" height="10" viewBox="0 0 10 10"><path d="M0 5.500h10" stroke="#888" /></svg>
          <svg width="10" height="9" viewBox="0 0 10 9" fill="none" stroke="#777"><path d="M.5 2.500h7v6h-7zM2.500 2.500v-2h7v6h-2" /></svg>
          <svg width="10" height="9" viewBox="0 0 11 10"><path d="M.5.5l10 9M10.500.5l-10 9" stroke="#777" /></svg>
        </WindowButtons>
      </TitleBar>
      <MenuBar>{menus.map(([m, w]) => (
        <MenuItem key={m} $w={w}>
          {m === "Proyecto" ? <>Pro<u>y</u>ecto</> : m === "Edición" ? <><u>E</u>dición</> : m}
        </MenuItem>
      ))}</MenuBar>
      <Toolbars />
      <Body><Layers /><Canvas><GeoMap /></Canvas></Body>
      <Status />
      <Properties />
    </Window>
  );
}
